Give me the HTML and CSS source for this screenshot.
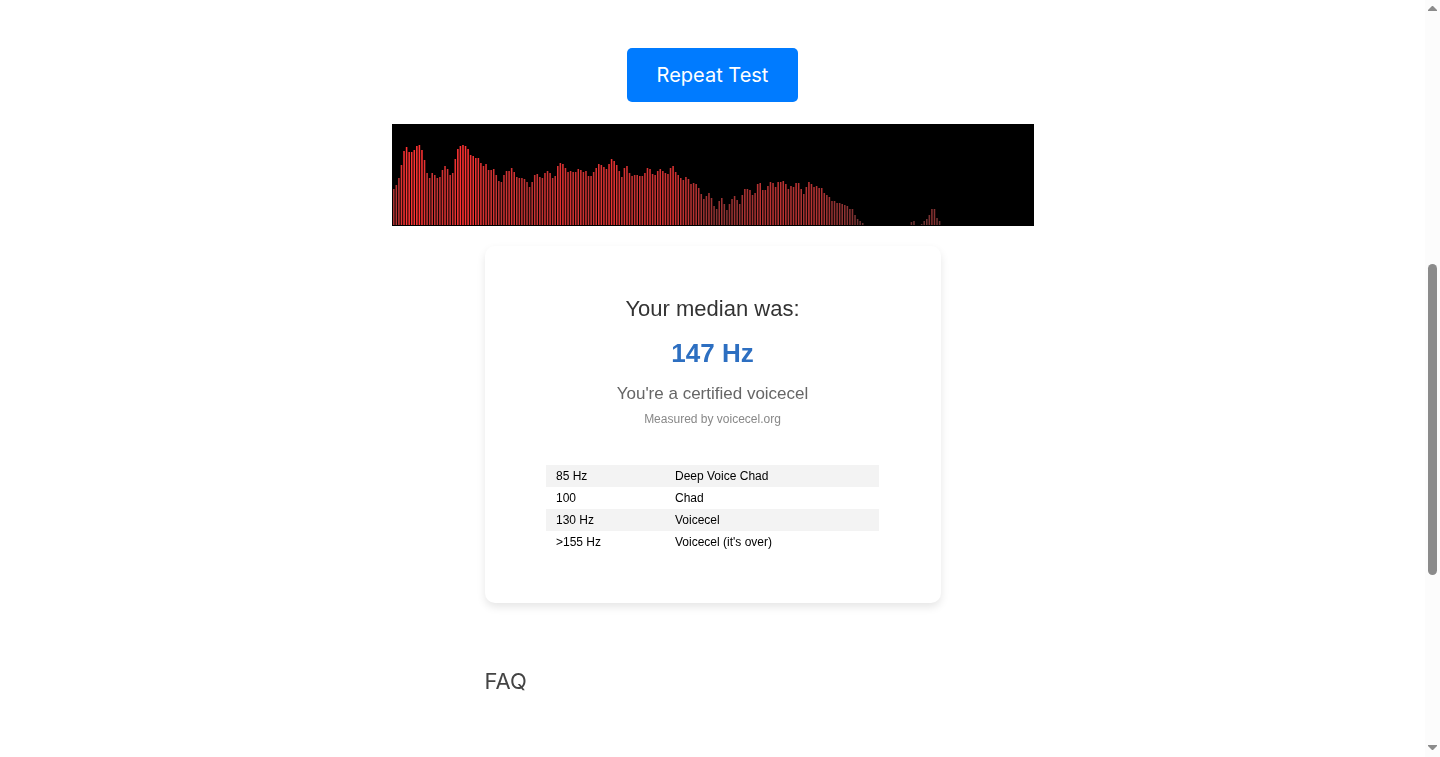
FILE: index.html
```
<!DOCTYPE html>
<html lang="en">
<head>
<meta charset="UTF-8">
<meta name="viewport" content="width=device-width, initial-scale=1.0">
<title>Voice Test</title>
<link rel="stylesheet" href="styles.css">
</head>
<body>

<main class="page">
    <button type="button" class="test-button">Repeat Test</button>
    <canvas id="visualizer" class="visualizer" width="640" height="100"></canvas>

    <section class="result-card">
        <p class="result-title">Your median was:</p>
        <p class="result-value">147 Hz</p>
        <p class="result-text">You're a certified voicecel</p>
        <p class="result-source">Measured by voicecel.org</p>
        <table class="scale">
            <tr>
                <td>85 Hz</td>
                <td>Deep Voice Chad</td>
            </tr>
            <tr>
                <td>100</td>
                <td>Chad</td>
            </tr>
            <tr>
                <td>130 Hz</td>
                <td>Voicecel</td>
            </tr>
            <tr>
                <td>&gt;155 Hz</td>
                <td>Voicecel (it's over)</td>
            </tr>
        </table>
    </section>

    <section class="faq">
        <h2>FAQ</h2>
    </section>
</main>

<div class="scrollbar" aria-hidden="true">
    <svg class="arrow" width="9" height="5" viewBox="0 0 9 5"><path d="M4 0h1l4 4v1H0V4z"/></svg>
    <div class="track"><div class="thumb"></div></div>
    <svg class="arrow" width="9" height="5" viewBox="0 0 9 5"><path d="M0 0h9v1L5 5H4L0 1z"/></svg>
</div>

<script src="script.js"></script>
</body>
</html>
```
FILE: styles.css
```
body {
    display: flex;
    min-height: 100vh;
    margin: 0;
    background-color: #fff;
    font-family: Inter, "Liberation Sans", Arial, sans-serif;
}
.page {
    display: flex;
    flex: 1;
    flex-direction: column;
    align-items: center;
    padding-top: 48px;
}
.test-button {
    padding: 15px 30px;
    background-color: #007bff;
    color: #fff;
    border: none;
    border-radius: 5px;
    font-family: inherit;
    font-size: 20px;
    line-height: 24px;
    cursor: pointer;
}
.test-button:hover {
    background-color: #0056b3;
}
.visualizer {
    max-width: 100%;
    margin: 22px 0 20px;
    border: 1px solid #000;
    background-color: #000;
}
.result-card {
    box-sizing: border-box;
    width: 32%;
    min-width: 360px;
    padding: 49px 10px 50px;
    background-color: #fff;
    border-radius: 10px;
    box-shadow: 0 4px 8px rgba(0, 0, 0, 0.1);
    font-family: "Liberation Sans", Arial, sans-serif;
    text-align: center;
}
.result-card p {
    margin: 0;
}
.result-title {
    color: #333;
    font-size: 22px;
    line-height: 28px;
}
.result-card .result-value {
    margin: 15px 0;
    color: #2d6fc1;
    font-size: 26px;
    font-weight: bold;
    line-height: 30px;
}
.result-text {
    color: #666;
    font-size: 17px;
    line-height: 22px;
}
.result-source {
    color: #888;
    font-size: 12px;
    line-height: 28px;
}
.scale {
    width: 333px;
    margin: 32px auto 0;
    border-collapse: collapse;
    font-size: 12px;
    line-height: 14px;
    text-align: left;
}
.scale td {
    padding: 4px 10px;
}
.scale td:first-child {
    width: 99px;
}
.scale tr:nth-child(odd) {
    background-color: #f3f3f3;
}
.faq {
    width: 32%;
    min-width: 360px;
    margin-top: 64px;
}
.faq h2 {
    margin: 0;
    color: #444;
    font-size: 22px;
    font-weight: normal;
    line-height: 28px;
}
.scrollbar {
    display: flex;
    flex-direction: column;
    align-items: center;
    box-sizing: border-box;
    width: 15px;
    padding: 6px 0 7px;
    background-color: #fcfcfc;
}
.arrow {
    fill: #8b8b8b;
}
.track {
    display: flex;
    flex: 1;
    padding-top: 253px;
}
.thumb {
    width: 9px;
    height: 311px;
    border-radius: 5px;
    background-color: #8b8b8b;
}
```
FILE: script.js
```
var canvas = document.getElementById('visualizer');
var ctx = canvas.getContext('2d');

// bar heights in px, lowest frequency first
var levels = [
    36, 40, 47, 60, 74, 78, 73, 73, 75, 79, 80, 75, 65, 52, 47, 52, 50, 47, 48, 55,
    59, 56, 50, 52, 66, 76, 79, 80, 79, 76, 70, 69, 67, 67, 62, 59, 61, 55, 55, 56,
    50, 44, 43, 50, 54, 54, 57, 53, 48, 47, 47, 46, 43, 38, 43, 50, 51, 48, 47,
    52, 54, 52, 47, 49, 59, 62, 61, 57, 53, 54, 53, 53, 56, 55, 53, 54, 49, 49, 53,
    57, 61, 60, 58, 56, 61, 66, 64, 60, 54, 48, 57, 59, 52, 49, 50, 50, 49, 49, 52,
    57, 56, 51, 50, 54, 56, 54, 52, 51, 57, 59, 53, 50, 47, 45, 48, 46, 41, 42, 41,
    37, 31, 26, 29, 32, 27, 19, 16, 24, 27, 21, 15, 21, 26, 29, 25, 21, 30, 36, 36,
    35, 30, 32, 41, 42, 35, 35, 39, 43, 42, 38, 43, 43, 44, 41, 36, 39, 38, 42, 42,
    36, 31, 38, 43, 41, 38, 39, 37, 37, 32, 30, 28, 24, 24, 22, 22, 21, 20, 19, 16,
    16, 10, 6, 4, 2, 0, 0, 0, 0, 0, 0, 0, 0, 0, 0, 0, 0, 0, 0, 0,
    0, 0, 0, 3, 4, 0, 0, 1, 4, 6, 10, 16, 16, 7, 4
];

function draw() {
    var barWidth = (canvas.width / 1024) * 2.5;
    var x = 0;

    ctx.fillStyle = 'rgb(0, 0, 0)';
    ctx.fillRect(0, 0, canvas.width, canvas.height);

    for (var i = 0; i < levels.length; i++) {
        ctx.fillStyle = 'rgb(' + (levels[i] * 2 + 100) + ', 50, 50)';
        ctx.fillRect(x, canvas.height - levels[i], barWidth, levels[i]);
        x += barWidth + 1;
    }
}

draw();
```
